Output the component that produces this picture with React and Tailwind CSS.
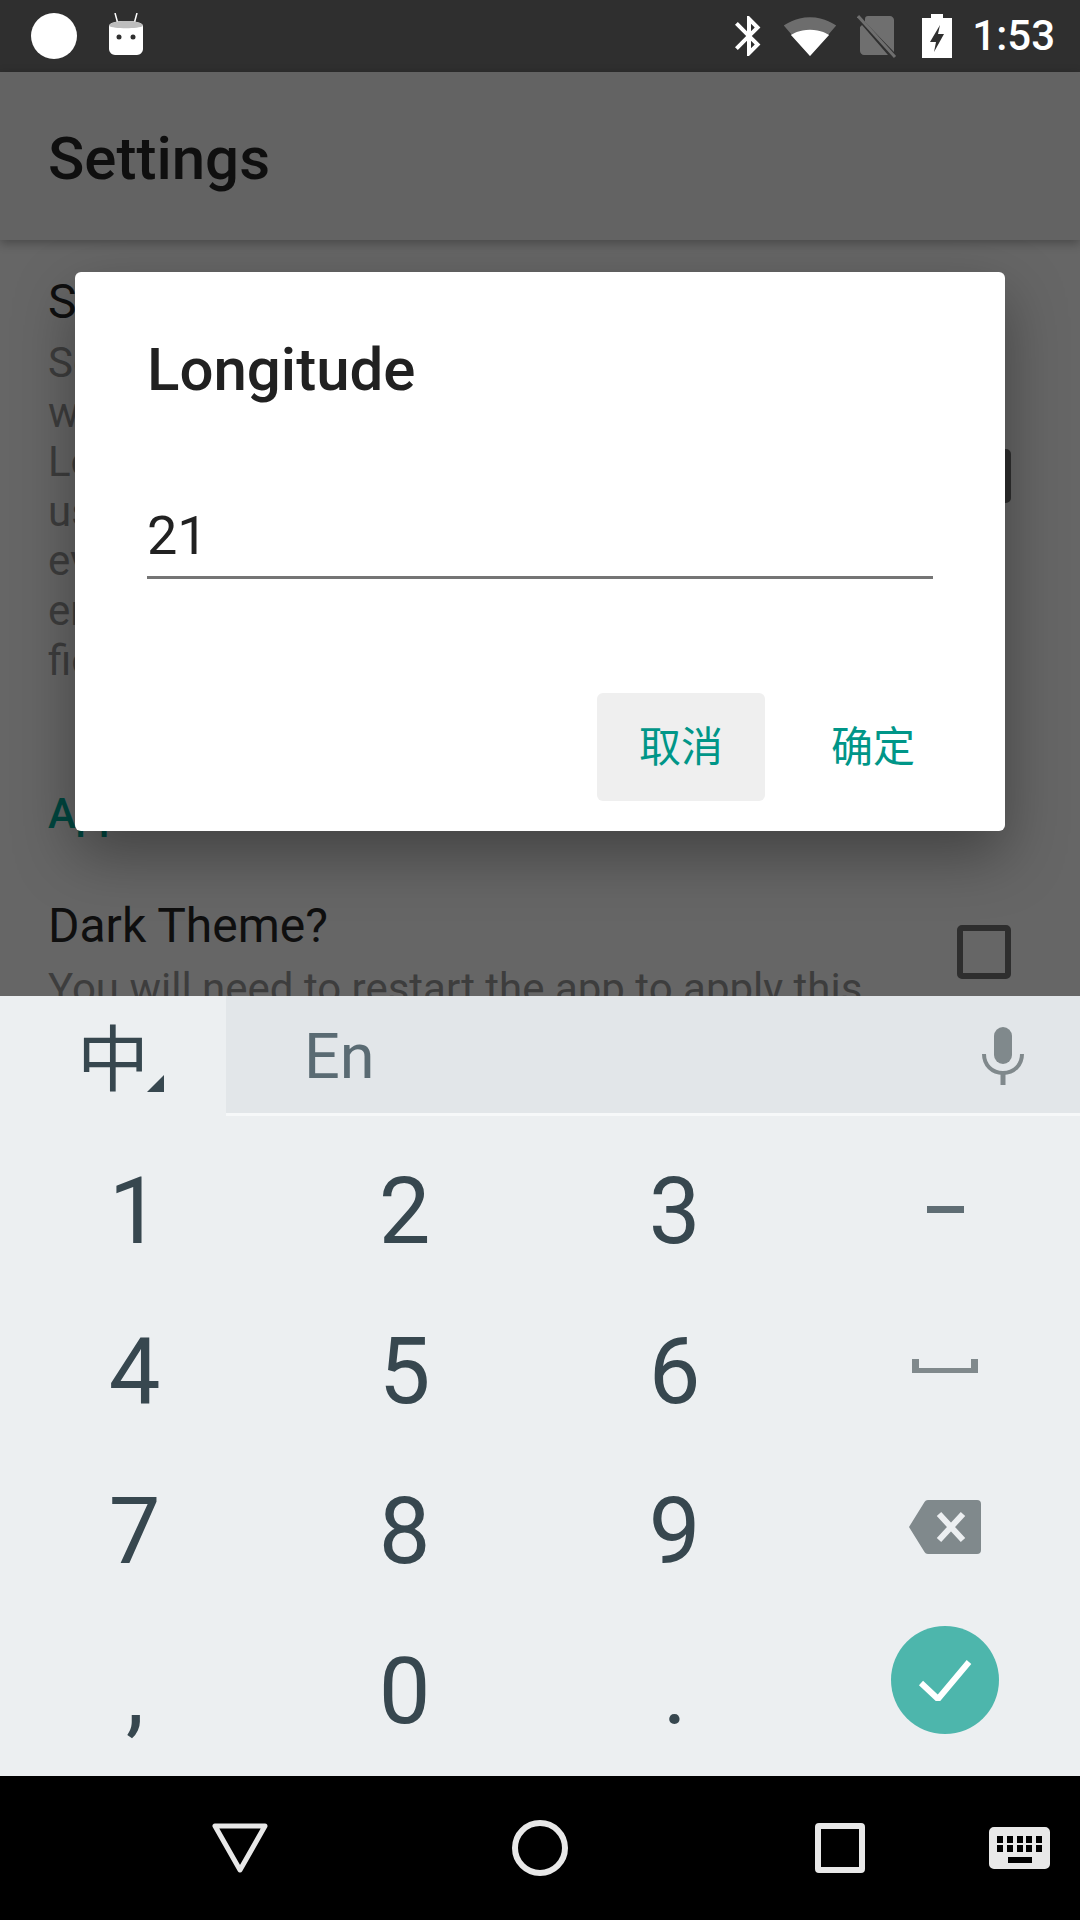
const roboto = "font-['Roboto',sans-serif]";
const cjk = "font-['Roboto','Noto_Sans_CJK_SC',sans-serif]";

function StatusBar() {
  return (
    <div className={`h-[72px] shrink-0 bg-[#2f2f2f] flex items-center pl-[31px] pr-[25px] ${roboto}`}>
      <div className="w-[46px] h-[46px] rounded-full bg-white" />
      {/* notification cat */}
      <svg width="36" height="42" viewBox="0 0 36 42" className="ml-[31px] -mt-[5px]">
        <path d="M7 0l3 11M29 0l-3 11" stroke="#fff" strokeWidth="1.5" />
        <path d="M1 13c0-3 7-5 17-5s17 2 17 5v23c0 3-3 6-6 6H7c-3 0-6-3-6-6z" fill="#fff" />
        <path d="M1 13c0-3 7-5 17-5s17 2 17 5c-4 3-30 3-34 0z" fill="#bdbdbd" />
        <circle cx="11" cy="24" r="2.5" fill="#2f2f2f" />
        <circle cx="25" cy="24" r="2.5" fill="#2f2f2f" />
      </svg>
      <div className="flex-1" />
      <svg width="48" height="48" viewBox="0 0 24 24" className="-mr-[14px]">
        <path fill="#fff" d="M17.71 7.71L12 2h-1v7.59L6.41 5 5 6.41 10.59 12 5 17.59 6.41 19 11 14.41V22h1l5.71-5.71-4.3-4.29 4.3-4.29zM13 5.83l1.88 1.88L13 9.59V5.83zm1.88 10.46L13 18.17v-3.76l1.88 1.88z" />
      </svg>
      <svg width="54" height="44" viewBox="0 1.5 24 21" preserveAspectRatio="none" className="ml-[24px]">
        <path fill="#fff" fillOpacity=".3" d="M12.01 21.49L23.64 7c-.45-.34-4.93-4-11.64-4C5.28 3 .81 6.66.36 7l11.63 14.49.01.01.01-.01z" />
        <path fill="#fff" d="M3.530 11.500l8.460 9.990.01.01.01-.01 8.460-9.990C20.040 11.170 16.810 9 12 9c-4.810 0-8.040 2.170-8.470 2.500z" />
      </svg>
      <svg width="40" height="44" viewBox="0 0 40 44" className="ml-[20px]">
        <path fill="#6f6f6f" d="M11 2h22c2 0 4 2 4 4v32L8 8V5c0-2 1-3 3-3zM5 11l26 30H7c-2 0-4-2-4-4V13z" />
        <path d="M1 2l37 41" stroke="#6f6f6f" strokeWidth="3" />
      </svg>
      <svg width="30" height="44" viewBox="0 0 30 44" className="ml-[25px]">
        <path fillRule="evenodd" fill="#fff" d="M9 0h12v4h9v40H0V4h9zM18 11l-10 17h6l-2 10 10-18h-6z" />
      </svg>
      <span className="ml-[20px] text-[42px] leading-none font-medium text-white">1:53</span>
    </div>
  );
}

function CheckBox({ checked, className }) {
  return (
    <div className={`w-[54px] h-[54px] shrink-0 rounded-[5px] border-[6px] border-[#2e2e2e] ${checked ? 'bg-[#2e2e2e]' : ''} ${className}`} />
  );
}

function SettingsBehind() {
  return (
    <main className={`relative flex-1 min-h-0 overflow-hidden bg-[#666666] ${roboto}`}>
      <div className="pl-[48px] pr-[69px] pt-[34px]">
        <div className="flex items-start justify-between">
          <div className="w-[780px]">
            <p className="text-[48px] leading-[56px] text-[#0f0f0f]">Set location</p>
            <div className="mt-[8px] text-[42px] leading-[49.6px] text-[#3d3d3d]">
              <p>Set the coordinates used</p>
              <p>when looking up the sun</p>
              <p>Location is only</p>
              <p>used locally</p>
              <p>every time</p>
              <p>enter the</p>
              <p>fields</p>
            </div>
          </div>
          <CheckBox checked className="mt-[175px]" />
        </div>
        <p className="mt-[104px] text-[42px] leading-[50px] font-medium text-[#00463f]">App</p>
        <div className="mt-[59px] flex items-start justify-between">
          <div>
            <p className="text-[48px] leading-[56px] text-[#0f0f0f]">Dark Theme?</p>
            <p className="mt-[10px] text-[42px] leading-[49.6px] text-[#3d3d3d]">You will need to restart the app to apply this</p>
          </div>
          <CheckBox className="mt-[27px]" />
        </div>
      </div>
    </main>
  );
}

function Dialog() {
  return (
    <div className={`absolute left-[75px] top-[272px] w-[930px] h-[559px] rounded-[6px] bg-white shadow-[0_24px_60px_rgba(0,0,0,0.35)] ${cjk}`}>
      <div className="pl-[72px] pr-[72px] pt-[61px]">
        <h2 className="text-[60px] leading-[74px] font-medium text-[#212121]">Longitude</h2>
        <div className="mt-[93px] h-[79px] border-b-[3px] border-[#757575] text-[54px] leading-[72px] text-[#212121]">21</div>
      </div>
      <div className="mt-[114px] pr-[48px] flex justify-end gap-[24px] text-[42px] text-[#009688]">
        <button className="w-[168px] h-[108px] rounded-[6px] bg-[#efefef] text-[#009688]">取消</button>
        <button className="w-[168px] h-[108px] rounded-[6px] text-[#009688]">确定</button>
      </div>
    </div>
  );
}

function KeyboardTop() {
  return (
    <div className="flex h-[120px] shrink-0">
      <div className="relative w-[226px] shrink-0 flex justify-center pt-[22px] bg-[#eceff1] text-[72px] leading-[72px] text-[#37474f] font-['Noto_Sans_CJK_SC',sans-serif]">
        中
        <svg width="17" height="17" viewBox="0 0 17 17" className="absolute left-[147px] top-[79px]">
          <path d="M17 0v17H0z" fill="#37474f" />
        </svg>
      </div>
      <div className="flex-1 flex flex-col">
        <div className="flex-1 flex items-center justify-between bg-[#e2e6e9] pl-[78px] pr-[56px]">
          <span className={`text-[63px] leading-none mt-[4px] text-[#5a6b73] ${roboto}`}>En</span>
          <svg width="42" height="58" viewBox="0 0 42 58" className="mt-[2px]">
            <rect x="12" y="0" width="18" height="37" rx="9" fill="#80898c" />
            <path d="M2 27c0 11 8 19 19 19s19-8 19-19" fill="none" stroke="#80898c" strokeWidth="4" />
            <path d="M21 44v14" stroke="#80898c" strokeWidth="5" />
          </svg>
        </div>
        <div className="h-[3px] bg-[#f6f8f9]" />
      </div>
    </div>
  );
}

function Digit({ children }) {
  return <span className="text-[92px] leading-none mt-[4px] -ml-[1px] text-[#37474f]">{children}</span>;
}

function NumberPad() {
  return (
    <div className={`grid grid-cols-4 auto-rows-[160px] pt-[14px] ${roboto}`}>
      {['1', '2', '3'].map(n => <div key={n} className="flex items-center justify-center"><Digit>{n}</Digit></div>)}
      <div className="flex items-center justify-center">
        <div className="w-[37px] h-[7px] -mt-[1px] bg-[#5f6d74]" />
      </div>
      {['4', '5', '6'].map(n => <div key={n} className="flex items-center justify-center"><Digit>{n}</Digit></div>)}
      <div className="flex items-center justify-center">
        <svg width="66" height="14" viewBox="0 0 66 14" className="-mt-[8px]"><path d="M0 0h7v9h52V0h7v14H0z" fill="#80898c" /></svg>
      </div>
      {['7', '8', '9'].map(n => <div key={n} className="flex items-center justify-center"><Digit>{n}</Digit></div>)}
      <div className="flex items-center justify-center">
        <svg width="72" height="54" viewBox="0 0 72 54" className="-mt-[6px]">
          <path d="M19 0h49a4 4 0 0 1 4 4v46a4 4 0 0 1-4 4H19a4 4 0 0 1-3.500-2L0 27 15.500 2A4 4 0 0 1 19 0z" fill="#80898c" />
          <path d="M30 14l24 26M54 14L30 40" stroke="#eceff1" strokeWidth="6" />
        </svg>
      </div>
      <div className="flex items-center justify-center">
        <span className="text-[92px] leading-none text-[#37474f] mt-[8px]">,</span>
      </div>
      <div className="flex items-center justify-center"><Digit>0</Digit></div>
      <div className="flex items-center justify-center">
        <span className="text-[92px] leading-none text-[#37474f] mt-[4px]">.</span>
      </div>
      <div className="flex items-center justify-center">
        <div className="w-[108px] h-[108px] -mt-[20px] rounded-full bg-[#4db6ac] flex items-center justify-center">
          <svg width="54" height="42" viewBox="0 0 54 42"><path d="M3 24l17 16L51 3" fill="none" stroke="#fff" strokeWidth="6" /></svg>
        </div>
      </div>
    </div>
  );
}

function NavBar() {
  return (
    <div className="h-[144px] shrink-0 bg-black flex items-center pl-[212px]">
      <svg width="56" height="50" viewBox="0 0 56 50">
        <path d="M3 3h50L28 47z" fill="none" stroke="#e8e8e8" strokeWidth="5" strokeLinejoin="round" />
      </svg>
      <div className="ml-[244px] w-[56px] h-[56px] rounded-full border-[6px] border-[#e8e8e8]" />
      <div className="ml-[247px] w-[50px] h-[50px] rounded-[4px] border-[6px] border-[#e8e8e8]" />
      <svg width="61" height="42" viewBox="0 0 61 42" className="ml-[124px]">
        <path fillRule="evenodd" fill="#e8e8e8" d="M5 0h51a5 5 0 0 1 5 5v32a5 5 0 0 1-5 5H5a5 5 0 0 1-5-5V5a5 5 0 0 1 5-5zM8 9v7h6V9zM18 9v7h6V9zM28 9v7h6V9zM37 9v7h6V9zM47 9v7h6V9zM8 18v7h6v-7zM18 18v7h6v-7zM28 18v7h6v-7zM37 18v7h6v-7zM47 18v7h6v-7zM19 30v6h24v-6z" />
      </svg>
    </div>
  );
}

export default function App() {
  return (
    <div className="relative w-[1080px] h-[1920px] flex flex-col overflow-hidden">
      <StatusBar />
      <header className={`h-[168px] shrink-0 bg-[#636363] flex items-center pl-[48px] pt-[5px] shadow-[0_3px_10px_rgba(0,0,0,0.3)] z-10 ${roboto}`}>
        <h1 className="text-[60px] font-medium leading-none text-[#0f0f0f]">Settings</h1>
      </header>
      <SettingsBehind />
      <div className="h-[780px] shrink-0 bg-[#eceff1] z-20">
        <KeyboardTop />
        <NumberPad />
      </div>
      <NavBar />
      <Dialog />
    </div>
  );
}
